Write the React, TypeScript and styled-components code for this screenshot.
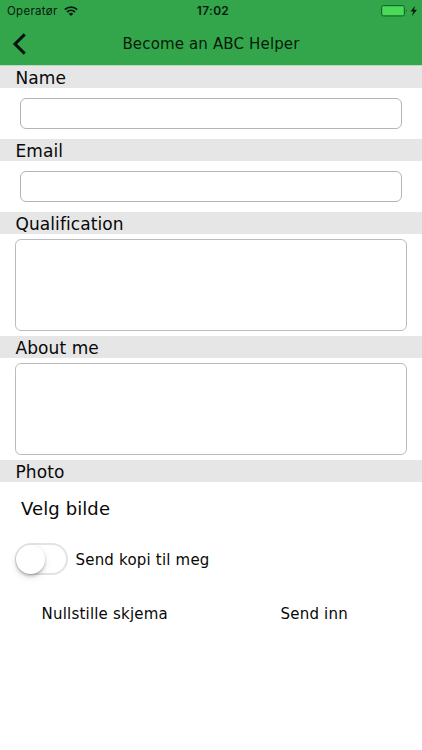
import React, { useState } from "react";
import styled, { createGlobalStyle } from "styled-components";

const GlobalStyle = createGlobalStyle`
  *, *::before, *::after { box-sizing: border-box; }
  body {
    margin: 0;
    background: #fff;
    color: #080808;
    font-family: Verdana, "DejaVu Sans", sans-serif;
    font-variant-ligatures: none;
  }
  button, input, textarea { font: inherit; color: inherit; }
`;

const Screen = styled.main`
  display: flex;
  flex-direction: column;
  width: 100%;
  height: 750px;
  overflow: hidden;
  background: #fff;
`;

const Header = styled.header`
  height: 66px;
  flex: none;
  background: #33a64c;
  border-bottom: 1px solid #b9dcc0;
  color: #061b0a;
`;

const StatusBar = styled.div`
  display: grid;
  grid-template-columns: 1fr auto 1fr;
  align-items: center;
  height: 22px;
  padding: 0 4px 0 7px;
  font-family: Inter, sans-serif;
  font-size: 12px;
  line-height: 22px;
`;

const Carrier = styled.div`
  display: flex;
  align-items: center;
  gap: 6px;
  font-size: 11.5px;
  letter-spacing: 0.3px;
`;

const Clock = styled.div`
  font-weight: 600;
  letter-spacing: 0.3px;
  padding-left: 1px;
`;

const Power = styled.div`
  display: flex;
  justify-content: flex-end;
  align-items: center;
`;

const NavBar = styled.div`
  display: grid;
  grid-template-columns: 46px 1fr 46px;
  align-items: center;
  height: 43px;
`;

const BackButton = styled.button`
  display: flex;
  padding: 0 0 0 12px;
  border: 0;
  background: none;
`;

const Title = styled.h1`
  margin: 0;
  text-align: center;
  font-size: 15px;
  font-weight: 400;
  line-height: 20px;
  letter-spacing: 0.15px;
  white-space: nowrap;
`;

const Form = styled.form`
  display: flex;
  flex-direction: column;
`;

const Label = styled.label`
  height: 22px;
  padding-left: 15.5px;
  background: #e6e6e6;
  font-size: 17px;
  line-height: 24px;
  letter-spacing: 0.08px;
`;

const TextInput = styled.input`
  height: 31px;
  margin: 10px 20px;
  width: calc(100% - 40px);
  border: 1px solid #b4b4b4;
  border-radius: 6px;
  background: #fff;
  outline: none;
`;

const TextBox = styled.textarea`
  display: block;
  height: 92px;
  width: calc(100% - 30px);
  margin: 5px 15px;
  border: 1px solid #bcbcbc;
  border-radius: 6px;
  background: #fff;
  resize: none;
  outline: none;
`;

const PickButton = styled.button`
  height: 26px;
  margin: 14px 0 0 21px;
  padding: 0;
  border: 0;
  background: none;
  text-align: left;
  font-size: 18px;
  line-height: 26px;
  letter-spacing: 0.1px;
`;

const CopyRow = styled.div`
  display: flex;
  align-items: center;
  gap: 7.5px;
  height: 32px;
  margin: 21px 0 0 15px;
  font-size: 15px;
  letter-spacing: 0.2px;
`;

const CopyText = styled.span`
  padding-top: 1px;
`;

const Toggle = styled.button<{ $on: boolean }>`
  display: flex;
  justify-content: ${(p) => (p.$on ? "flex-end" : "flex-start")};
  width: 53px;
  height: 32px;
  padding: 0;
  border: 2px solid #e3e3e3;
  border-radius: 16px;
  background: ${(p) => (p.$on ? "#33a64c" : "#fff")};
`;

const Knob = styled.span`
  width: 29px;
  height: 29px;
  margin: 0 -1px;
  flex: none;
  border-radius: 50%;
  background: #fff;
  box-shadow: 0 2px 3px rgba(0, 0, 0, 0.22), 0 3px 7px rgba(0, 0, 0, 0.12);
`;

const Actions = styled.div`
  display: grid;
  grid-template-columns: 1fr 1fr;
  margin-top: 27px;
  padding-right: 3px;
`;

const Action = styled.button`
  height: 24px;
  padding: 0;
  border: 0;
  background: none;
  font-size: 15px;
  line-height: 24px;
  letter-spacing: 0.2px;
`;

const Wifi = () => (
  <svg width="14" height="10" viewBox="0 0 14 10" fill="none" stroke="currentColor">
    <path d="M.8 3.7C4.3.3 9.7.3 13.2 3.7M3 6C5.3 3.9 8.7 3.9 11 6" strokeWidth="1.8" />
    <path d="M7 10 4.7 7.7Q7 5.9 9.3 7.7Z" fill="currentColor" stroke="none" />
  </svg>
);

const Battery = () => (
  <svg width="37" height="12" viewBox="0 0 37 12">
    <rect x=".5" y=".5" width="23" height="10.5" rx="2" fill="#33a64c" stroke="#176b2a" />
    <rect x="1.4" y="1.4" width="21.2" height="8.7" rx="1" fill="#4ada58" />
    <path d="M25 4q1.5 1.8 0 3.6z" fill="#176b2a" />
    <path d="M34 .8 29.6 6.5h2.8l-1.6 4.8 5.2-6.5h-3z" fill="#061b0a" />
  </svg>
);

const Chevron = () => (
  <svg width="15" height="22" viewBox="0 0 15 22" fill="none" stroke="#071009" strokeWidth="3">
    <path d="M12.7 1.4 3 11l9.7 9.6" />
  </svg>
);

export default function App() {
  const [copy, setCopy] = useState(false);
  return (
    <>
      <GlobalStyle />
      <Screen>
        <Header>
          <StatusBar>
            <Carrier>Operatør <Wifi /></Carrier>
            <Clock>17:02</Clock>
            <Power><Battery /></Power>
          </StatusBar>
          <NavBar>
            <BackButton type="button" aria-label="Back"><Chevron /></BackButton>
            <Title>Become an ABC Helper</Title>
          </NavBar>
        </Header>
        <Form onSubmit={(e) => e.preventDefault()}>
          <Label htmlFor="name">Name</Label>
          <TextInput id="name" />
          <Label htmlFor="email">Email</Label>
          <TextInput id="email" />
          <Label htmlFor="qualification">Qualification</Label>
          <TextBox id="qualification" />
          <Label htmlFor="about">About me</Label>
          <TextBox id="about" />
          <Label htmlFor="photo">Photo</Label>
          <PickButton id="photo" type="button">Velg bilde</PickButton>
          <CopyRow>
            <Toggle
              type="button"
              role="switch"
              aria-checked={copy}
              aria-label="Send kopi til meg"
              $on={copy}
              onClick={() => setCopy(!copy)}
            >
              <Knob />
            </Toggle>
            <CopyText>Send kopi til meg</CopyText>
          </CopyRow>
          <Actions>
            <Action type="reset">Nullstille skjema</Action>
            <Action type="submit">Send inn</Action>
          </Actions>
        </Form>
      </Screen>
    </>
  );
}
